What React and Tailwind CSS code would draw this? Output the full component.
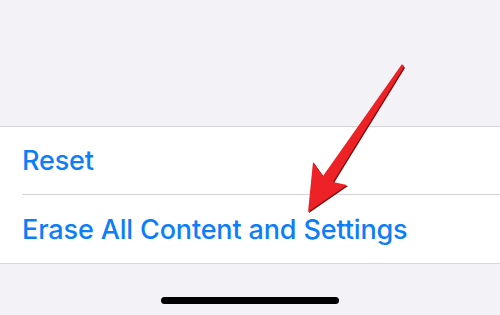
export default function App() {
  return (
    <div className="relative w-[500px] h-[315px] overflow-hidden bg-[#f2f2f7] font-['Inter',sans-serif]">
      <div className="h-[126px]" />
      <div className="bg-white border-y border-[#d6d6da]">
        <Row label="Reset" divider />
        <Row label="Erase All Content and Settings" />
      </div>
      <div className="flex justify-center pt-[33px]">
        <div className="w-[178px] h-[7px] rounded-full bg-black" />
      </div>
      <Arrow />
    </div>
  );
}

function Row({ label, divider }) {
  return (
    <div className="pl-[22px]">
      <div
        className={`h-[68px] flex items-center pt-[2px] text-[27px] font-medium text-[#0d7ef8] tracking-[-0.15px] ${
          divider ? "border-b border-[#d6d6da]" : ""
        }`}
      >
        {label}
      </div>
    </div>
  );
}

function Arrow() {
  const d = "M402 64 L404 67 L333 182 L347 185 L308 212 L313 162 L323 176 Z";
  return (
    <svg
      className="absolute left-0 top-0"
      width="500"
      height="315"
      viewBox="0 0 500 315"
    >
      <path d={d} fill="#7a1014" transform="translate(1 1)" />
      <path d={d} fill="#ec2227" />
    </svg>
  );
}
